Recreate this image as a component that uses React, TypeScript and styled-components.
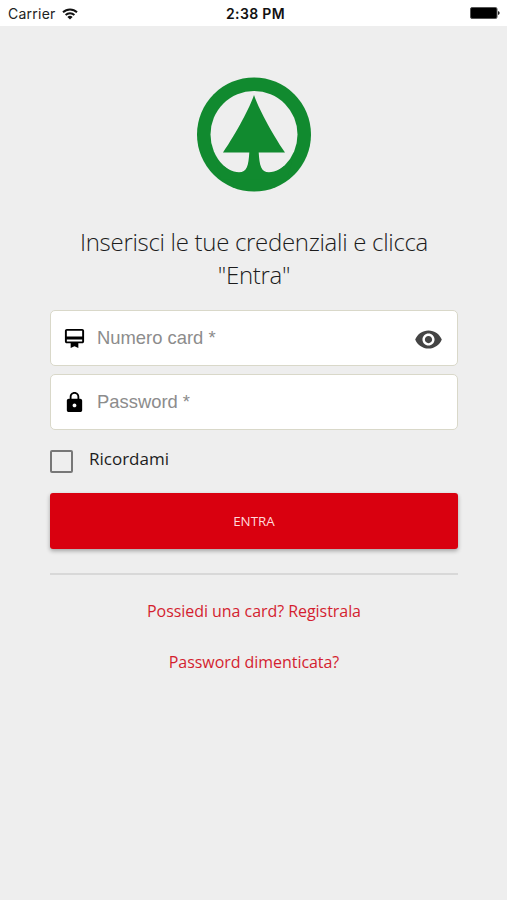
import React from 'react';
import styled, { createGlobalStyle } from 'styled-components';

const GlobalStyle = createGlobalStyle`
  * { box-sizing: border-box; }
  body { margin: 0; background: #eeeeee; }
`;

const Screen = styled.div`
  display: flex;
  flex-direction: column;
  height: 900px;
  background: #eeeeee;
  font-family: 'Open Sans', sans-serif;
`;

const StatusBar = styled.header`
  display: grid;
  grid-template-columns: 1fr auto 1fr;
  align-items: center;
  height: 26px;
  padding: 1px 7px 0 8px;
  background: #fff;
  color: #222;
  font: 400 14px/24px Inter, sans-serif;
`;

const Carrier = styled.div`
  display: flex;
  align-items: center;
  gap: 6px;
  letter-spacing: 0.25px;
`;

const Clock = styled.div`
  padding-left: 3px;
  font-weight: 600;
  letter-spacing: 0.35px;
  color: #111;
`;

const Battery = styled.svg`
  justify-self: end;
  margin-top: -2px;
`;

const Content = styled.main`
  display: flex;
  flex-direction: column;
  padding: 51px 49px 0 50px;
`;

const Logo = styled.svg`
  display: block;
  align-self: center;
  width: 114px;
  height: 115px;
`;

const Heading = styled.h1`
  margin: 33px 0 0;
  color: #1c1c1c;
  font-size: 24px;
  font-weight: 300;
  line-height: 33px;
  letter-spacing: -0.3px;
  text-align: center;
`;

const Fields = styled.div`
  display: grid;
  gap: 8px;
  margin-top: 19px;
`;

const Field = styled.label`
  display: flex;
  align-items: center;
  height: 56px;
  padding: 0 14px 0 11px;
  border: 1px solid #d9d8c9;
  border-radius: 5px;
  background: #fff;
`;

const IconSlot = styled.span`
  display: grid;
  place-items: center;
  flex: none;
  width: 24px;
  height: 24px;
`;

const FieldIcon = styled.svg<{ $size: number }>`
  width: ${(p) => p.$size}px;
  height: ${(p) => p.$size}px;
  fill: #000;
`;

const EyeIcon = styled.svg`
  flex: none;
  width: 29px;
  height: 29px;
  margin-top: 2px;
  fill: #444;
`;

const Input = styled.input`
  flex: 1;
  min-width: 0;
  margin-left: 11px;
  padding: 0;
  border: 0;
  outline: 0;
  background: transparent;
  font: 18.4px/24px 'Liberation Sans', sans-serif;
  &::placeholder { color: #8c8c8c; opacity: 1; }
`;

const Remember = styled.label`
  display: flex;
  align-items: center;
  gap: 16px;
  height: 24px;
  margin-top: 18px;
  color: #1c1c1c;
  font-size: 17px;
  line-height: 24px;
`;

const Checkbox = styled.input`
  appearance: none;
  width: 23px;
  height: 23px;
  margin: 2px 0 0;
  border: 2px solid #777;
  border-radius: 2px;
`;

const RememberText = styled.span`
  margin-top: -3px;
`;

const Submit = styled.button`
  height: 56px;
  margin-top: 21px;
  padding: 0;
  border: 0;
  border-radius: 3px;
  background: #d9000f;
  box-shadow: 0 2px 4px rgba(0, 0, 0, 0.32);
  color: #ffd9dc;
  font: 400 13.4px/20px 'Open Sans', sans-serif;
`;

const Divider = styled.hr`
  width: 100%;
  height: 2px;
  margin: 24px 0 0;
  border: 0;
  background: #d8d8d8;
`;

const Links = styled.nav`
  display: flex;
  flex-direction: column;
  align-items: center;
  gap: 27px;
  margin-top: 24px;
`;

const TextLink = styled.a`
  color: #d41e30;
  font-size: 16px;
  line-height: 24px;
  letter-spacing: -0.05px;
  text-decoration: none;
`;

export default function App() {
  return (
    <Screen>
      <GlobalStyle />
      <StatusBar>
        <Carrier>
          <span>Carrier</span>
          <svg width="16" height="12" viewBox="0 0 16 12" fill="none" stroke="#111" strokeWidth="1.9">
            <path d="M1 4.3a10 10 0 0 1 14 0" />
            <path d="M3.6 7a6.3 6.3 0 0 1 8.8 0" />
            <path d="M8 11.6 5.4 9a3.7 3.7 0 0 1 5.2 0Z" fill="#111" stroke="none" />
          </svg>
        </Carrier>
        <Clock>2:38 PM</Clock>
        <Battery width="30" height="12" viewBox="0 0 30 12">
          <rect x="0.5" y="0.5" width="26.5" height="11" rx="1.5" fill="#000" stroke="#555" />
          <path d="M28 4v4q1.7-.5 1.7-2T28 4Z" fill="#222" />
        </Battery>
      </StatusBar>
      <Content>
        <Logo viewBox="0 -0.5 114 115">
          <circle cx="57" cy="57" r="57" fill="#118a2f" />
          <circle cx="57" cy="57" r="43.5" fill="#eeeeee" />
          <path
            fill="#118a2f"
            d="M57 17.5C61 29.5 74 54.5 88 75H61.7C62.5 88 64 94.8 72 94.8C78 94.8 87 91 96 80L90 102H24L18 80C27 91 36 94.8 42 94.8C50 94.8 51.5 88 52.3 75H26C40 54.5 53 29.5 57 17.5Z"
          />
        </Logo>
        <Heading>Inserisci le tue credenziali e clicca "Entra"</Heading>
        <Fields>
          <Field>
            <IconSlot>
              <FieldIcon $size={23} viewBox="0 0 24 24">
                <path d="M20 2H4c-1.11 0-2 .89-2 2v11c0 1.11.89 2 2 2h4v5l4-2 4 2v-5h4c1.11 0 2-.89 2-2V4c0-1.11-.89-2-2-2zm0 13H4v-2h16v2zm0-5H4V4h16v6z" />
              </FieldIcon>
            </IconSlot>
            <Input placeholder="Numero card *" />
            <EyeIcon viewBox="0 0 24 24">
              <path d="M12 4.5C7 4.5 2.73 7.61 1 12c1.73 4.39 6 7.5 11 7.5s9.27-3.11 11-7.5c-1.73-4.39-6-7.5-11-7.5zM12 17c-2.76 0-5-2.24-5-5s2.24-5 5-5 5 2.24 5 5-2.24 5-5 5zm0-8c-1.66 0-3 1.34-3 3s1.34 3 3 3 3-1.34 3-3-1.34-3-3-3z" />
            </EyeIcon>
          </Field>
          <Field>
            <IconSlot>
              <FieldIcon $size={23} viewBox="0 0 24 24">
                <path d="M18 8h-1V6c0-2.76-2.24-5-5-5S7 3.24 7 6v2H6c-1.1 0-2 .9-2 2v10c0 1.1.9 2 2 2h12c1.1 0 2-.9 2-2V10c0-1.1-.9-2-2-2zm-6 9c-1.1 0-2-.9-2-2s.9-2 2-2 2 .9 2 2-.9 2-2 2zm3.1-9H8.9V6c0-1.71 1.39-3.1 3.1-3.1 1.71 0 3.1 1.39 3.1 3.1v2z" />
              </FieldIcon>
            </IconSlot>
            <Input type="password" placeholder="Password *" />
          </Field>
        </Fields>
        <Remember>
          <Checkbox type="checkbox" />
          <RememberText>Ricordami</RememberText>
        </Remember>
        <Submit type="button">ENTRA</Submit>
        <Divider />
        <Links>
          <TextLink href="#">Possiedi una card? Registrala</TextLink>
          <TextLink href="#">Password dimenticata?</TextLink>
        </Links>
      </Content>
    </Screen>
  );
}
